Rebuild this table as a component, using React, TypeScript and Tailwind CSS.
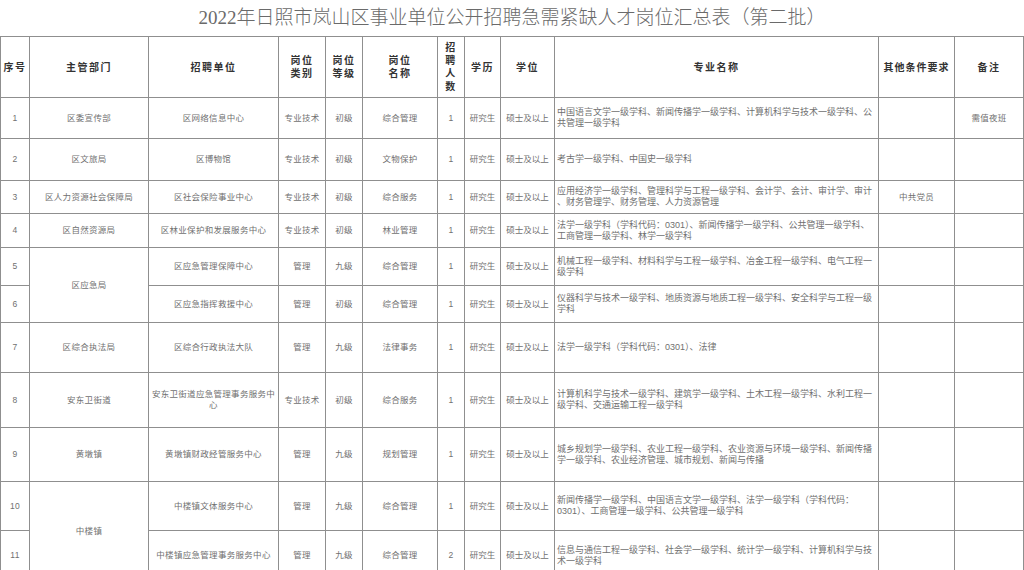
import React from "react";

type Row = {
  no: string;
  dept?: string;
  deptSpan?: number;
  unit: React.ReactNode;
  type: string;
  level: string;
  post: string;
  count: string;
  major: string[];
  other?: string;
  note?: string;
  h: string;
};

const rows: Row[] = [
  {
    no: "1",
    dept: "区委宣传部",
    unit: "区网络信息中心",
    type: "专业技术",
    level: "初级",
    post: "综合管理",
    count: "1",
    major: ["中国语言文学一级学科、新闻传播学一级学科、计算机科学与技术一级学科、公", "共管理一级学科"],
    note: "需值夜班",
    h: "h-[41px]",
  },
  {
    no: "2",
    dept: "区文旅局",
    unit: "区博物馆",
    type: "专业技术",
    level: "初级",
    post: "文物保护",
    count: "1",
    major: ["考古学一级学科、中国史一级学科"],
    h: "h-[42px]",
  },
  {
    no: "3",
    dept: "区人力资源社会保障局",
    unit: "区社会保险事业中心",
    type: "专业技术",
    level: "初级",
    post: "综合服务",
    count: "1",
    major: ["应用经济学一级学科、管理科学与工程一级学科、会计学、会计、审计学、审计", "、财务管理学、财务管理、人力资源管理"],
    other: "中共党员",
    h: "h-[33px]",
  },
  {
    no: "4",
    dept: "区自然资源局",
    unit: "区林业保护和发展服务中心",
    type: "专业技术",
    level: "初级",
    post: "林业管理",
    count: "1",
    major: ["法学一级学科（学科代码：0301）、新闻传播学一级学科、公共管理一级学科、", "工商管理一级学科、林学一级学科"],
    h: "h-[34px]",
  },
  {
    no: "5",
    dept: "区应急局",
    deptSpan: 2,
    unit: "区应急管理保障中心",
    type: "管理",
    level: "九级",
    post: "综合管理",
    count: "1",
    major: ["机械工程一级学科、材料科学与工程一级学科、冶金工程一级学科、电气工程一", "级学科"],
    h: "h-[38px]",
  },
  {
    no: "6",
    unit: "区应急指挥救援中心",
    type: "管理",
    level: "初级",
    post: "综合管理",
    count: "1",
    major: ["仪器科学与技术一级学科、地质资源与地质工程一级学科、安全科学与工程一级", "学科"],
    h: "h-[37px]",
  },
  {
    no: "7",
    dept: "区综合执法局",
    unit: "区综合行政执法大队",
    type: "管理",
    level: "九级",
    post: "法律事务",
    count: "1",
    major: ["法学一级学科（学科代码：0301）、法律"],
    h: "h-[50px]",
  },
  {
    no: "8",
    dept: "安东卫街道",
    unit: (
      <>
        安东卫街道应急管理事务服务中
        <br />心
      </>
    ),
    type: "专业技术",
    level: "初级",
    post: "综合服务",
    count: "1",
    major: ["计算机科学与技术一级学科、建筑学一级学科、土木工程一级学科、水利工程一", "级学科、交通运输工程一级学科"],
    h: "h-[55px]",
  },
  {
    no: "9",
    dept: "黄墩镇",
    unit: "黄墩镇财政经管服务中心",
    type: "管理",
    level: "九级",
    post: "规划管理",
    count: "1",
    major: ["城乡规划学一级学科、农业工程一级学科、农业资源与环境一级学科、新闻传播", "学一级学科、农业经济管理、城市规划、新闻与传播"],
    h: "h-[54px]",
  },
  {
    no: "10",
    dept: "中楼镇",
    deptSpan: 2,
    unit: "中楼镇文体服务中心",
    type: "管理",
    level: "九级",
    post: "综合管理",
    count: "1",
    major: ["新闻传播学一级学科、中国语言文学一级学科、法学一级学科（学科代码：", "0301）、工商管理一级学科、公共管理一级学科"],
    h: "h-[49px]",
  },
  {
    no: "11",
    unit: "中楼镇应急管理事务服务中心",
    type: "管理",
    level: "九级",
    post: "综合管理",
    count: "2",
    major: ["信息与通信工程一级学科、社会学一级学科、统计学一级学科、计算机科学与技", "术一级学科"],
    h: "h-[50px]",
  },
];

const cell = "border border-[#8f8f8f] text-center align-middle p-0";
const head = `${cell} text-[10px] font-bold text-[#333] leading-[13px] tracking-[1.5px]`;
const body = `${cell} text-[8.5px] text-[#707070] leading-[11px] tracking-[0.3px]`;

export default function App() {
  return (
    <div
      className="h-[570px] w-[1024px] overflow-hidden bg-white"
      style={{ fontFamily: '"Liberation Sans", "Noto Sans CJK SC", sans-serif' }}
    >
      <div className="flex h-[36px] items-center justify-center">
        <h1
          className="text-[19px] font-light text-[#6a6a6a]"
          style={{ fontFamily: '"Liberation Serif", "Noto Sans CJK SC", serif' }}
        >
          2022年日照市岚山区事业单位公开招聘急需紧缺人才岗位汇总表（第二批）
        </h1>
      </div>
      <table className="w-[1023px] table-fixed border-collapse">
        <colgroup>
          <col className="w-[29px]" />
          <col className="w-[119px]" />
          <col className="w-[130px]" />
          <col className="w-[47px]" />
          <col className="w-[37px]" />
          <col className="w-[75px]" />
          <col className="w-[27px]" />
          <col className="w-[36px]" />
          <col className="w-[54px]" />
          <col className="w-[324px]" />
          <col className="w-[76px]" />
          <col className="w-[69px]" />
        </colgroup>
        <thead>
          <tr className="h-[61px]">
            <th className={`${head} tracking-[0px]`}>序号</th>
            <th className={head}>主管部门</th>
            <th className={head}>招聘单位</th>
            <th className={head}>
              岗位
              <br />
              类别
            </th>
            <th className={head}>
              岗位
              <br />
              等级
            </th>
            <th className={head}>
              岗位
              <br />
              名称
            </th>
            <th className={`${head} leading-[12px]`}>
              招<br />聘<br />人<br />数
            </th>
            <th className={head}>学历</th>
            <th className={head}>学位</th>
            <th className={head}>专业名称</th>
            <th className={`${head} tracking-[1px]`}>其他条件要求</th>
            <th className={head}>备注</th>
          </tr>
        </thead>
        <tbody>
          {rows.map((r) => (
            <tr key={r.no} className={r.h}>
              <td className={`${body} text-[#8a8a8a]`}>{r.no}</td>
              {r.dept && (
                <td className={body} rowSpan={r.deptSpan ?? 1}>
                  {r.dept}
                </td>
              )}
              <td className={body}>{r.unit}</td>
              <td className={body}>{r.type}</td>
              <td className={body}>{r.level}</td>
              <td className={body}>{r.post}</td>
              <td className={body}>{r.count}</td>
              <td className={`${body} text-[#555] tracking-[0px]`}>研究生</td>
              <td className={`${body} text-[#555] tracking-[0px]`}>硕士及以上</td>
              <td className={`${body} text-left whitespace-nowrap px-[2px] text-[9px] tracking-[0px]`}>
                {r.major.map((m, i) => (
                  <div key={i}>{m}</div>
                ))}
              </td>
              <td className={body}>{r.other}</td>
              <td className={body}>{r.note}</td>
            </tr>
          ))}
        </tbody>
      </table>
    </div>
  );
}
